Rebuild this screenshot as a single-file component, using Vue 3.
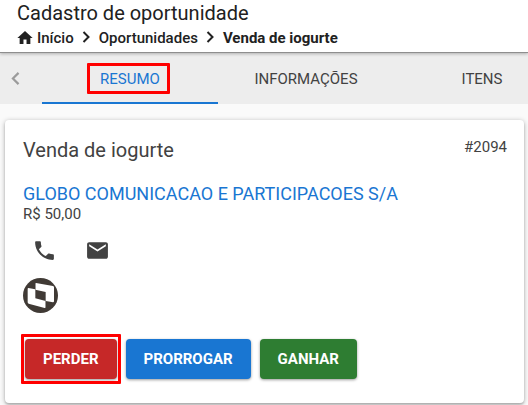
<script setup>
const tabs = [
  { label: 'RESUMO', active: true },
  { label: 'INFORMAÇÕES', active: false },
  { label: 'ITENS', active: false },
]
const actions = [
  { label: 'PERDER', tone: 'red', marked: true },
  { label: 'PRORROGAR', tone: 'blue', marked: false },
  { label: 'GANHAR', tone: 'green', marked: false },
]
</script>

<template>
  <div class="page">
    <header class="top">
      <h1>Cadastro de oportunidade</h1>
      <nav class="crumbs" aria-label="Navegação">
        <a href="#inicio" class="home">
          <svg class="house" viewBox="2 3 20 17" aria-hidden="true"><path d="M10 20v-6h4v6h5v-8h3L12 3 2 12h3v8z" /></svg>
          <span>Início</span>
        </a>
        <svg class="sep" viewBox="0 0 8 12" aria-hidden="true"><path d="M1.5 1l5 5-5 5" /></svg>
        <a href="#oportunidades">Oportunidades</a>
        <svg class="sep" viewBox="0 0 8 12" aria-hidden="true"><path d="M1.5 1l5 5-5 5" /></svg>
        <strong>Venda de iogurte</strong>
      </nav>
    </header>

    <div class="tabbar">
      <button class="prev" type="button" aria-label="Anterior">
        <svg viewBox="0 0 8 12" aria-hidden="true"><path d="M6.8 .8L1.6 6l5.2 5.2" /></svg>
      </button>
      <div class="tabs" role="tablist">
        <button
          v-for="t in tabs"
          :key="t.label"
          type="button"
          role="tab"
          :aria-selected="t.active"
          class="tab"
          :class="{ active: t.active }"
        >
          <span :class="{ marked: t.active }">{{ t.label }}</span>
        </button>
      </div>
    </div>

    <main class="card">
      <div class="head">
        <h2>Venda de iogurte</h2>
        <span class="code">#2094</span>
      </div>
      <a href="#cliente" class="client">GLOBO COMUNICACAO E PARTICIPACOES S/A</a>
      <p class="value">R$ 50,00</p>
      <div class="contacts">
        <button type="button" aria-label="Telefone">
          <svg viewBox="0 0 24 24" aria-hidden="true"><path d="M6.62 10.79c1.44 2.83 3.76 5.14 6.59 6.59l2.2-2.2c.27-.27.67-.36 1.02-.24 1.12.37 2.33.57 3.57.57.55 0 1 .45 1 1V20c0 .55-.45 1-1 1-9.39 0-17-7.61-17-17 0-.55.45-1 1-1h3.5c.55 0 1 .45 1 1 0 1.25.2 2.45.57 3.57.11.35.03.74-.25 1.02z" /></svg>
        </button>
        <button type="button" aria-label="E-mail">
          <svg viewBox="0 0 24 24" aria-hidden="true"><path d="M20 4H4c-1.1 0-2 .9-2 2v12c0 1.1.9 2 2 2h16c1.1 0 2-.9 2-2V6c0-1.1-.9-2-2-2zm0 4l-8 5-8-5V6l8 5 8-5z" /></svg>
        </button>
      </div>
      <svg class="logo" viewBox="0 0 105 105" role="img" aria-label="Responsável">
        <circle cx="52.5" cy="52.5" r="52.5" fill="#403a35" />
        <path fill="#fff" d="M39 15L90 24q3 1 3 4V70q0 3-3 3L68 69V42L37 35V17q0-2 2-2z" />
        <path fill="#fff" d="M16 30L37 34V61L68 69V88q0 3-3 2L17 77q-3-1-3-4V33q0-3 2-3z" />
        <path fill="none" stroke="#403a35" stroke-opacity=".5" stroke-width="2" d="M37 16V35M68 69V90" />
      </svg>
      <div class="actions">
        <button v-for="a in actions" :key="a.label" type="button" class="btn" :class="[a.tone, { flagged: a.marked }]">
          {{ a.label }}
        </button>
      </div>
    </main>
  </div>
</template>

<style>
body {
  background: #fafafa;
}
</style>

<style scoped>
.page {
  font-family: Roboto, "Liberation Sans", sans-serif;
  color: #424242;
  overflow: hidden;
  padding-bottom: 16px;
}
h1, h2, p {
  margin: 0;
  font-weight: 400;
}
a {
  color: inherit;
  text-decoration: none;
}
button {
  font: inherit;
  color: inherit;
  border: 0;
  padding: 0;
  background: none;
}
svg {
  display: block;
  flex: none;
}
.top {
  position: relative;
  background: #fff;
  color: #212121;
  padding: 1px 17px 2px;
  border-bottom: 1px solid #8e8e8e;
  box-shadow: 0 1px 3px rgba(0, 0, 0, 0.25);
}
h1 {
  font-size: 20px;
  line-height: 24px;
}
.crumbs {
  display: flex;
  align-items: center;
  margin-top: 2px;
  font-size: 15px;
  line-height: 23px;
  font-weight: 500;
}
.crumbs strong {
  font-weight: 700;
}
.home {
  display: flex;
  align-items: center;
  gap: 4px;
}
.house {
  width: 16px;
  height: 13px;
  margin-bottom: 2px;
  fill: #212121;
}
.sep {
  width: 8px;
  height: 12px;
  margin: 0 9px 4px 8px;
  fill: none;
  stroke: #212121;
  stroke-width: 2;
}
.tabbar {
  display: flex;
  background: #ededed;
  height: 51px;
}
.prev {
  flex: none;
  width: 42px;
  padding-left: 11px;
}
.prev svg {
  width: 9px;
  height: 13px;
  fill: none;
  stroke: #9b9b9b;
  stroke-width: 2;
}
.tabs {
  display: flex;
  flex: 1;
  min-width: 0;
  overflow: hidden;
}
.tab {
  flex: none;
  width: 176px;
  padding-top: 2px;
  font-size: 15px;
  border-bottom: 2px solid transparent;
}
.tab.active {
  color: #1976d2;
  border-color: #1976d2;
}
.marked, .flagged {
  position: relative;
}
.marked::after, .flagged::after {
  content: "";
  position: absolute;
  border: 3px solid #f00;
  border-radius: 1px;
}
.marked::after {
  inset: -7px -10px -6px -13px;
}
.flagged::after {
  inset: -5px -4px;
}
.card {
  margin: 16px 4px 0 5px;
  padding: 17px 17px 24px 18px;
  background: #fff;
  border-radius: 4px;
  box-shadow: 0 1px 5px rgba(0, 0, 0, 0.3), 0 2px 2px rgba(0, 0, 0, 0.14);
}
.head {
  display: flex;
  justify-content: space-between;
  align-items: flex-start;
}
h2 {
  font-size: 20px;
  line-height: 26px;
}
.code {
  font-size: 15px;
  line-height: 20px;
}
.client {
  display: block;
  margin-top: 20px;
  color: #1976d2;
  font-size: 18px;
  line-height: 22px;
}
.value {
  font-size: 15px;
  line-height: 18px;
}
.contacts {
  display: flex;
  gap: 28px;
  padding: 15px 9px;
}
.contacts svg {
  width: 25px;
  height: 25px;
  fill: #424242;
}
.logo {
  width: 35px;
  height: 35px;
}
.actions {
  display: flex;
  gap: 9px;
  margin-top: 26px;
  padding-left: 2px;
}
.btn {
  height: 40px;
  padding: 0 18px;
  border-radius: 4px;
  color: #fff;
  font-size: 15px;
  font-weight: 700;
  box-shadow: 0 1px 3px rgba(0, 0, 0, 0.4);
}
.red { background: #c62828; }
.blue { background: #1976d2; }
.green { background: #2e7d32; }
</style>
